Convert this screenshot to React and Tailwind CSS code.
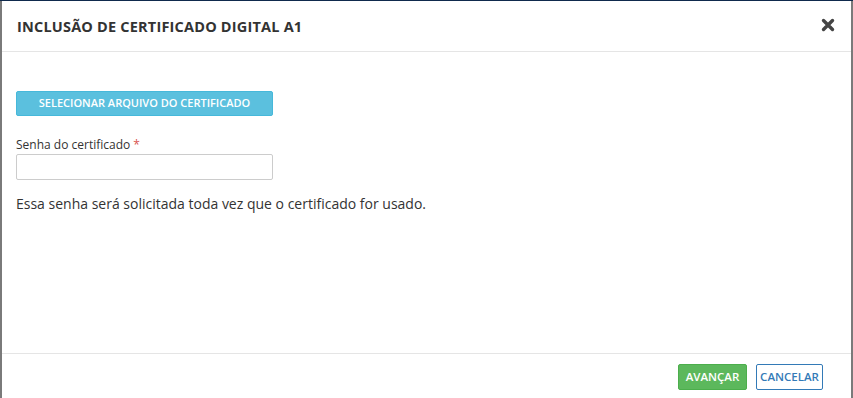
export default function App() {
  return (
    <div
      className="w-[853px] h-[398px] bg-[#7a7a7a] flex flex-col overflow-hidden"
      style={{ fontFamily: '"Open Sans", "Liberation Sans", sans-serif' }}
    >
      <div className="h-px bg-[#0f2a4d] shrink-0" />
      <div className="flex-1 ml-[2px] mr-[2px] bg-white flex flex-col">
        <div className="h-[51px] border-b border-[#e5e5e5] flex items-center justify-between pl-[15px] pr-[16px] shrink-0">
          <h1 className="text-[14.5px] font-bold text-[#333] tracking-[0.2px] pt-[2px]">
            INCLUSÃO DE CERTIFICADO DIGITAL A1
          </h1>
          <svg width="14" height="14" viewBox="0 0 14 14" className="mt-[-2px]">
            <path d="M2.5 2.5 L11.5 11.5 M11.5 2.5 L2.5 11.5" stroke="#444" strokeWidth="3.4" strokeLinecap="round" />
          </svg>
        </div>
        <div className="flex-1 px-[14px] pt-[37px]">
          <button className="w-[257px] h-[25px] bg-[#5bc0de] border border-[#46b8da] rounded-[2px] text-white text-[11px] font-semibold">
            SELECIONAR ARQUIVO DO CERTIFICADO
          </button>
          <div className="mt-[20px] text-[12px] text-[#333] leading-[17px]">
            Senha do certificado <span className="text-[#d9534f]">*</span>
          </div>
          <input
            type="password"
            className="block mt-[1px] w-[257px] h-[26px] border border-[#ccc] rounded-[2px] bg-white"
          />
          <p className="mt-[14px] text-[14px] text-[#333] leading-[20px]">
            Essa senha será solicitada toda vez que o certificado for usado.
          </p>
        </div>
        <div className="h-[45px] border-t border-[#e5e5e5] flex items-center justify-end gap-[9px] pr-[28px] pt-[2px] shrink-0">
          <button className="w-[69px] h-[26px] bg-[#5cb85c] border border-[#4cae4c] rounded-[2px] text-white text-[11.5px] font-semibold">
            AVANÇAR
          </button>
          <button className="w-[67px] h-[26px] bg-white border border-[#337ab7] rounded-[2px] text-[#337ab7] text-[11.5px] font-semibold">
            CANCELAR
          </button>
        </div>
      </div>
    </div>
  );
}
